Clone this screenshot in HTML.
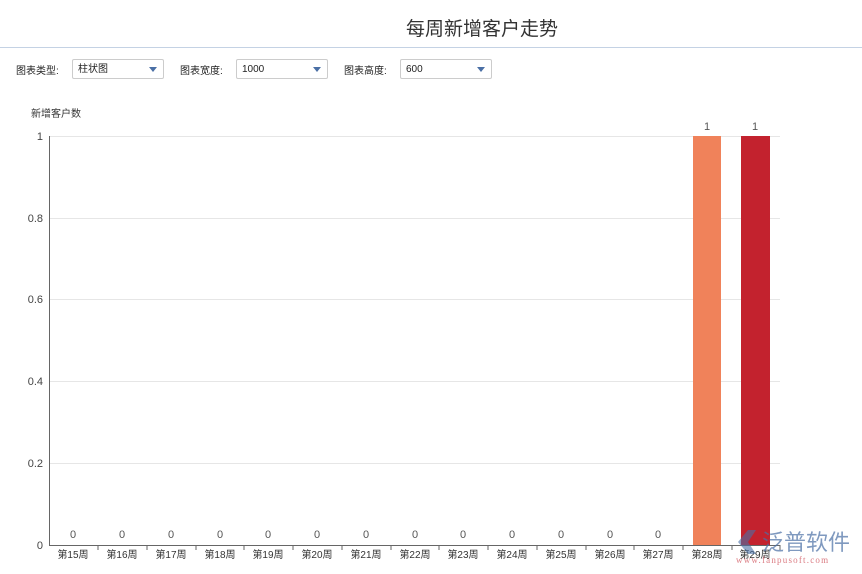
<!DOCTYPE html>
<html><head><meta charset="utf-8"><style>
body{margin:0;width:862px;height:574px;background:#fff;font-family:"Liberation Sans","Noto Sans CJK SC",sans-serif;position:relative;overflow:hidden;color:#333}
.t{position:absolute;top:14px;left:0;width:964px;text-align:center;font-size:19px;color:#333}
.hr{position:absolute;top:47px;left:0;width:862px;height:1px;background:#c4d2e4}
.lb{position:absolute;top:62px;font-size:10px;color:#222}
.sel{position:absolute;top:59px;height:20px;border:1px solid #ccc;border-radius:2px;font-size:10px;line-height:20px;padding-left:5px;box-sizing:border-box;color:#222}
.sel:after{content:"";position:absolute;right:6px;top:7px;border-left:4px solid transparent;border-right:4px solid transparent;border-top:5px solid #4a6fa5}
</style></head><body>
<div class="t">每周新增客户走势</div>
<div class="hr"></div>
<div class="lb" style="left:16px">图表类型:</div>
<div class="sel" style="left:72px;width:92px">柱状图</div>
<div class="lb" style="left:180px">图表宽度:</div>
<div class="sel" style="left:236px;width:92px">1000</div>
<div class="lb" style="left:344px">图表高度:</div>
<div class="sel" style="left:400px;width:92px">600</div>
<svg width="862" height="574" style="position:absolute;left:0;top:0" font-family="Liberation Sans,Noto Sans CJK SC,sans-serif">
<text x="31" y="117" font-size="10" fill="#333">新增客户数</text>
<g stroke="#e6e6e6" stroke-width="1">
<line x1="49" y1="136.5" x2="780" y2="136.5"/><line x1="49" y1="218.5" x2="780" y2="218.5"/><line x1="49" y1="299.5" x2="780" y2="299.5"/><line x1="49" y1="381.5" x2="780" y2="381.5"/><line x1="49" y1="463.5" x2="780" y2="463.5"/></g>
<line x1="49.5" y1="136" x2="49.5" y2="545" stroke="#666"/>
<line x1="49" y1="545.5" x2="780" y2="545.5" stroke="#666"/>
<g font-size="11" fill="#444" text-anchor="end">
<text x="43" y="140">1</text><text x="43" y="222">0.8</text><text x="43" y="303">0.6</text><text x="43" y="385">0.4</text><text x="43" y="467">0.2</text><text x="43" y="549">0</text></g>
<rect x="693" y="136" width="28" height="409" fill="#f0825a"/>
<rect x="741" y="136" width="29" height="409" fill="#c3222e"/>
<g font-size="11" fill="#555" text-anchor="middle">
<text x="707" y="130">1</text><text x="755" y="130">1</text>
<text x="73" y="538">0</text><text x="122" y="538">0</text><text x="171" y="538">0</text><text x="220" y="538">0</text><text x="268" y="538">0</text><text x="317" y="538">0</text><text x="366" y="538">0</text><text x="415" y="538">0</text><text x="463" y="538">0</text><text x="512" y="538">0</text><text x="561" y="538">0</text><text x="610" y="538">0</text><text x="658" y="538">0</text>
</g>
<g stroke="#666"><line x1="98" y1="545" x2="98" y2="550"/><line x1="147" y1="545" x2="147" y2="550"/><line x1="196" y1="545" x2="196" y2="550"/><line x1="244" y1="545" x2="244" y2="550"/><line x1="293" y1="545" x2="293" y2="550"/><line x1="342" y1="545" x2="342" y2="550"/><line x1="391" y1="545" x2="391" y2="550"/><line x1="439" y1="545" x2="439" y2="550"/><line x1="488" y1="545" x2="488" y2="550"/><line x1="537" y1="545" x2="537" y2="550"/><line x1="586" y1="545" x2="586" y2="550"/><line x1="634" y1="545" x2="634" y2="550"/><line x1="683" y1="545" x2="683" y2="550"/><line x1="732" y1="545" x2="732" y2="550"/><line x1="780" y1="545" x2="780" y2="550"/></g>
<g font-size="10" fill="#333" text-anchor="middle">
<text x="73" y="558">第15周</text><text x="122" y="558">第16周</text><text x="171" y="558">第17周</text><text x="220" y="558">第18周</text><text x="268" y="558">第19周</text><text x="317" y="558">第20周</text><text x="366" y="558">第21周</text><text x="415" y="558">第22周</text><text x="463" y="558">第23周</text><text x="512" y="558">第24周</text><text x="561" y="558">第25周</text><text x="610" y="558">第26周</text><text x="658" y="558">第27周</text><text x="707" y="558">第28周</text><text x="755" y="558">第29周</text></g>
<path d="M738 542 L748 530 L756 530 L748 542 L756 554 L748 554 Z" fill="#4a6fa5" opacity="0.6"/>
<text x="762" y="550" font-size="22" fill="#4a6fa5" opacity="0.7">泛普软件</text>
<text x="736" y="563" font-size="9" fill="#c3222e" opacity="0.6" font-family="Liberation Serif,serif" letter-spacing="1.2">www.fanpusoft.com</text>
</svg>
</body></html>
